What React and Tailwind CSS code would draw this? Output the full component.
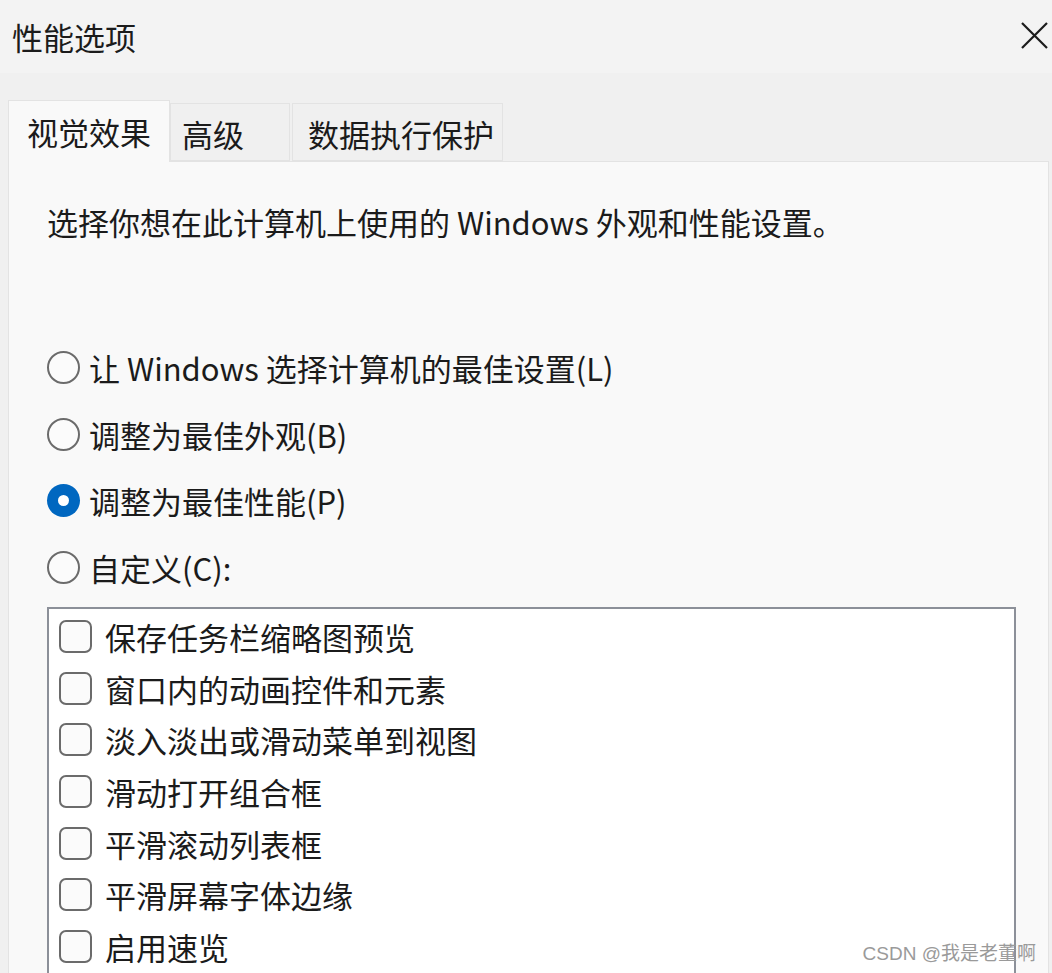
const font = { fontFamily: '"Noto Sans CJK SC", "Noto Sans", sans-serif' };

const radios = [
  { label: "让 Windows 选择计算机的最佳设置(L)", checked: false },
  { label: "调整为最佳外观(B)", checked: false },
  { label: "调整为最佳性能(P)", checked: true },
  { label: "自定义(C):", checked: false },
];

const options = [
  "保存任务栏缩略图预览",
  "窗口内的动画控件和元素",
  "淡入淡出或滑动菜单到视图",
  "滑动打开组合框",
  "平滑滚动列表框",
  "平滑屏幕字体边缘",
  "启用速览",
];

const Radio = ({ checked }) =>
  checked ? (
    <span className="flex h-[33px] w-[33px] shrink-0 items-center justify-center rounded-full bg-[#0067c0]">
      <span className="h-[11px] w-[11px] rounded-full bg-white" />
    </span>
  ) : (
    <span className="h-[33px] w-[33px] shrink-0 rounded-full border-2 border-[#6b6b6b] bg-[#fbfbfb]" />
  );

export default function App() {
  return (
    <div
      className="relative flex h-[973px] w-[1052px] flex-col overflow-hidden bg-[#f0f0f0] text-[#1b1b1b]"
      style={font}
    >
      {/* title bar */}
      <div className="flex h-[73px] shrink-0 items-center justify-between bg-[#f3f3f3] pl-[12px] pr-[3px]">
        <span className="text-[31px] leading-none">性能选项</span>
        <svg width="30" height="30" viewBox="0 0 30 30" className="mb-[4px]">
          <path d="M3 3 L28 28 M28 3 L3 28" stroke="#1b1b1b" strokeWidth="2.2" />
        </svg>
      </div>

      {/* tabs */}
      <div className="ml-[8px] mt-[27px] flex h-[61px] shrink-0 items-end">
        <div className="relative z-10 -mb-px flex h-[62px] w-[162px] items-center border border-b-0 border-[#e3e3e3] bg-[#f9f9f9] pl-[18px] text-[31px] leading-none">
          视觉效果
        </div>
        <div className="flex h-[58px] w-[120px] items-center border border-[#e3e3e3] bg-[#f0f0f0] pl-[11px] pt-[2px] text-[31px] leading-none">
          高级
        </div>
        <div className="ml-[2px] flex h-[58px] w-[211px] items-center border border-[#e3e3e3] bg-[#f0f0f0] pl-[15px] pt-[2px] text-[31px] leading-none">
          数据执行保护
        </div>
      </div>

      {/* panel */}
      <div className="ml-[8px] mr-[3px] flex flex-1 flex-col border border-b-0 border-[#e3e3e3] bg-[#f9f9f9] pl-[38px] pt-[40px]">
        <p className="h-[40px] text-[31px] leading-[40px]">
          选择你想在此计算机上使用的 Windows 外观和性能设置。
        </p>

        <div className="mt-[92px] flex flex-col">
          {radios.map((r, i) => (
            <div key={i} className="flex h-[66.7px] items-center gap-[9px]">
              <Radio checked={r.checked} />
              <span className="text-[31px] leading-none">{r.label}</span>
            </div>
          ))}
        </div>

        <div className="mt-[6px] mr-[32px] flex flex-1 flex-col border-2 border-b-0 border-[#8c9099] bg-white pl-[10px] pt-[2px]">
          {options.map((o) => (
            <div key={o} className="flex h-[51.67px] items-center gap-[13px]">
              <span className="h-[33px] w-[33px] shrink-0 rounded-[7px] border-2 border-[#6b6b6b] bg-[#fbfbfb]" />
              <span className="text-[31px] leading-none">{o}</span>
            </div>
          ))}
        </div>
      </div>

      <span
        className="absolute bottom-[10px] right-[16px] text-[19px] leading-none text-[#9a9a9a]"
        style={{ fontFamily: '"Liberation Sans", "Noto Sans CJK SC", sans-serif' }}
      >
        CSDN @我是老董啊
      </span>
    </div>
  );
}
